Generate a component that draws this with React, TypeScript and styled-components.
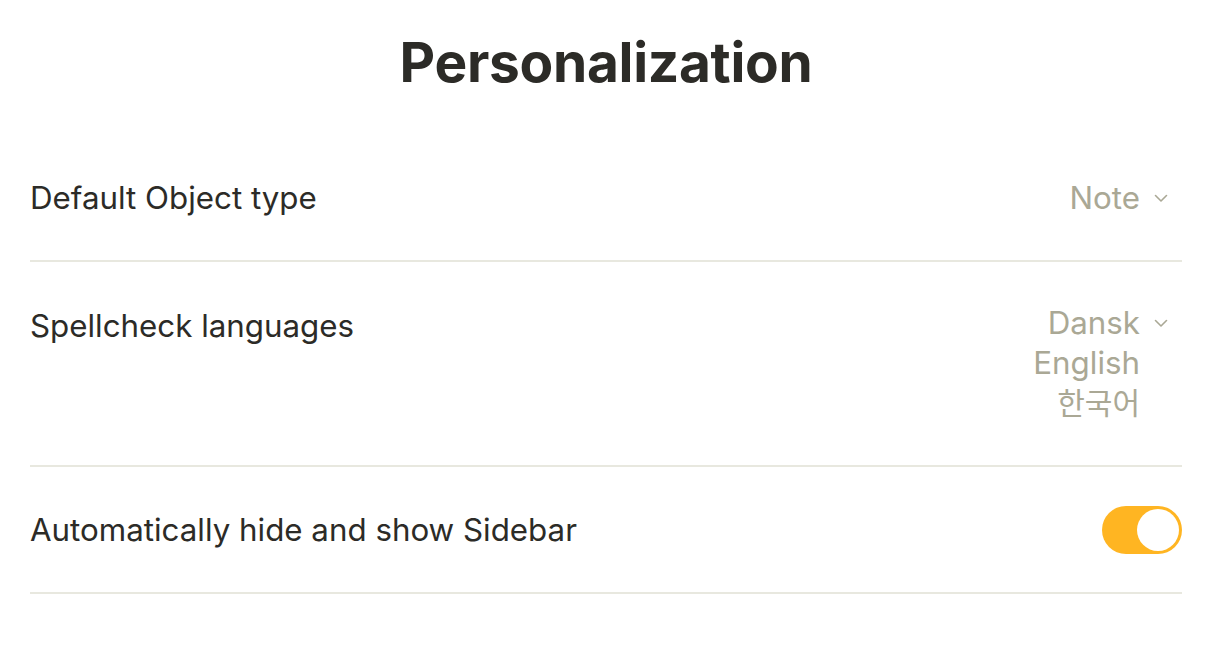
import React, { useState } from "react";
import styled, { createGlobalStyle } from "styled-components";

const Global = createGlobalStyle`
  html, body { margin: 0; padding: 0; background: #ffffff; }
  body { font-family: Inter, "Noto Sans", sans-serif; -webkit-font-smoothing: antialiased; }
`;

const Page = styled.div`
  width: 1220px;
  box-sizing: border-box;
  padding: 0 38px 0 30px;
  color: #2c2b27;
`;

const Title = styled.h1`
  margin: 0;
  padding-top: 30px;
  height: 134px;
  box-sizing: border-box;
  text-align: center;
  font-size: 55px;
  font-weight: 700;
  line-height: 64px;
  letter-spacing: -0.3px;
  color: #2c2b27;
`;

const Row = styled.div<{ $center?: boolean }>`
  display: flex;
  justify-content: space-between;
  align-items: ${(p) => (p.$center ? "center" : "flex-start")};
  padding: ${(p) => (p.$center ? "43px 0 42px" : "44px 0 42px")};
  border-bottom: 2px solid #e8e8df;
`;

const Label = styled.div`
  font-size: 31.3px;
  line-height: 40px;
  color: #2c2b27;
`;

const Select = styled.div`
  display: flex;
  align-items: flex-start;
  gap: 14px;
  padding-right: 14px;
  color: #aaa895;
  font-size: 31.3px;
  line-height: 40px;
`;

const ValueList = styled.div<{ $shift?: boolean }>`
  display: flex;
  flex-direction: column;
  align-items: flex-end;
  margin-top: ${(p) => (p.$shift ? "-3px" : "0")};
`;

const Value = styled.span<{ $cjk?: boolean }>`
  font-family: Inter, "Noto Sans CJK KR", sans-serif;
  font-size: ${(p) => (p.$cjk ? "30px" : "inherit")};
`;

const Chevron = styled.svg<{ $shift?: boolean }>`
  width: 14px;
  height: 40px;
  flex: none;
  margin-top: ${(p) => (p.$shift ? "-3px" : "0")};
`;

const Toggle = styled.button<{ $on: boolean }>`
  width: 80px;
  height: 48px;
  border: none;
  border-radius: 24px;
  padding: 3px;
  background: ${(p) => (p.$on ? "#ffb522" : "#e2e2dc")};
  display: flex;
  justify-content: ${(p) => (p.$on ? "flex-end" : "flex-start")};
  align-items: center;
  cursor: pointer;
  margin: -4px 0;
`;

const Knob = styled.span`
  width: 42px;
  height: 42px;
  border-radius: 50%;
  background: #ffffff;
`;

const Caret = ({ shift }: { shift?: boolean }) => (
  <Chevron viewBox="0 0 14 40" $shift={shift}>
    <path d="M1.5 17.5 L7 23 L12.5 17.5" fill="none" stroke="#aaa895" strokeWidth="1.6" strokeLinecap="round" strokeLinejoin="round" />
  </Chevron>
);

export default function App() {
  const [on, setOn] = useState(true);
  return (
    <Page>
      <Global />
      <Title>Personalization</Title>
      <Row>
        <Label>Default Object type</Label>
        <Select>
          <ValueList>
            <Value>Note</Value>
          </ValueList>
          <Caret />
        </Select>
      </Row>
      <Row>
        <Label>Spellcheck languages</Label>
        <Select>
          <ValueList $shift>
            <Value>Dansk</Value>
            <Value>English</Value>
            <Value $cjk>한국어</Value>
          </ValueList>
          <Caret shift />
        </Select>
      </Row>
      <Row $center>
        <Label>Automatically hide and show Sidebar</Label>
        <Toggle $on={on} onClick={() => setOn(!on)} aria-label="toggle">
          <Knob />
        </Toggle>
      </Row>
    </Page>
  );
}
